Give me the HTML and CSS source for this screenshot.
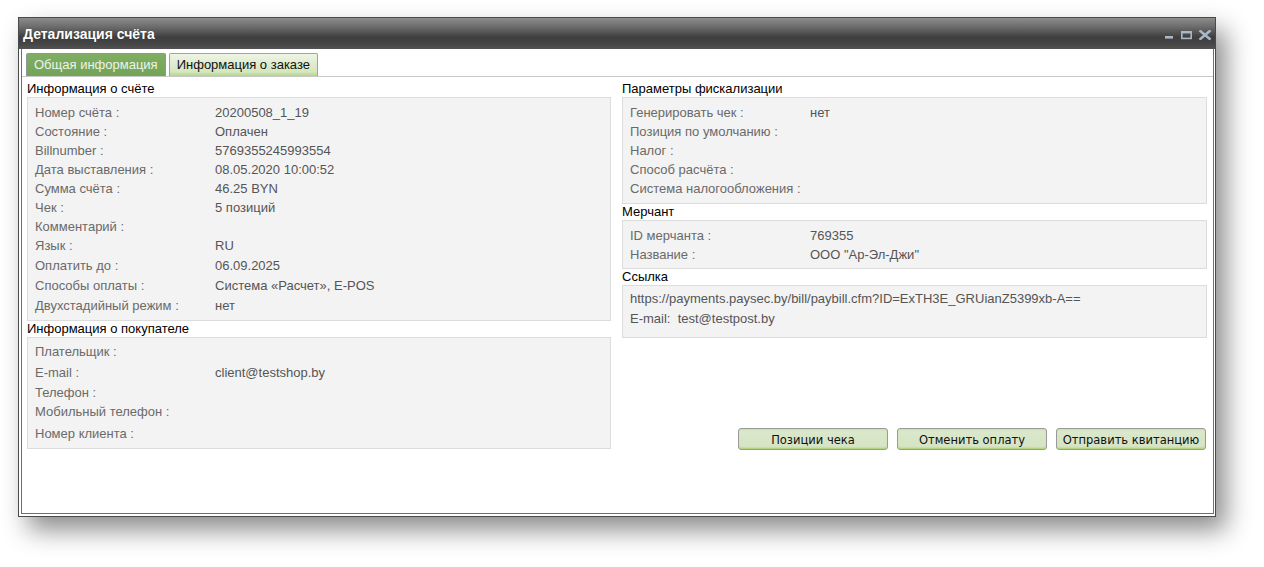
FILE: index.html
```html
<!DOCTYPE html>
<html lang="ru">
<head>
<meta charset="utf-8">
<title>Детализация счёта</title>
<link rel="stylesheet" href="styles.css">
</head>
<body>
<div class="desktop">
  <div class="window">
    <div class="titlebar">
      <span class="title">Детализация счёта</span>
      <svg class="controls" width="47" height="10" viewBox="0 0 47 10">
        <rect x="0" y="6" width="8" height="2.6" fill="#a9b7c6"/>
        <rect x="16.8" y="1.8" width="9.4" height="6.6" fill="none" stroke="#a9b7c6" stroke-width="1.6"/>
        <rect x="16" y="1" width="11" height="2.4" fill="#a9b7c6"/>
        <path d="M35.5 1.2 L44.5 8.8 M44.5 1.2 L35.5 8.8" stroke="#a9b7c6" stroke-width="2.6" stroke-linecap="square"/>
      </svg>
    </div>
    <div class="wbody">
      <div class="frame">
        <div class="tabs">
          <div class="tab active">Общая информация</div>
          <div class="tab">Информация о заказе</div>
        </div>
        <div class="panel">
          <div class="col">
            <div class="sec-title first">Информация о счёте</div>
            <div class="box box-bill">
              <div class="row"><span class="lbl">Номер счёта :</span><span class="val">20200508_1_19</span></div>
              <div class="row"><span class="lbl">Состояние :</span><span class="val">Оплачен</span></div>
              <div class="row"><span class="lbl">Billnumber :</span><span class="val">5769355245993554</span></div>
              <div class="row"><span class="lbl">Дата выставления :</span><span class="val">08.05.2020 10:00:52</span></div>
              <div class="row"><span class="lbl">Сумма счёта :</span><span class="val">46.25 BYN</span></div>
              <div class="row"><span class="lbl">Чек :</span><span class="val">5 позиций</span></div>
              <div class="row"><span class="lbl">Комментарий :</span><span class="val"></span></div>
              <div class="row"><span class="lbl">Язык :</span><span class="val">RU</span></div>
              <div class="row h21"><span class="lbl">Оплатить до :</span><span class="val">06.09.2025</span></div>
              <div class="row h20"><span class="lbl">Способы оплаты :</span><span class="val">Система «Расчет», E-POS</span></div>
              <div class="row h20"><span class="lbl">Двухстадийный режим :</span><span class="val">нет</span></div>
            </div>
            <div class="sec-title">Информация о покупателе</div>
            <div class="box box-buyer">
              <div class="row h20"><span class="lbl">Плательщик :</span><span class="val"></span></div>
              <div class="row h21"><span class="lbl">E-mail :</span><span class="val">client@testshop.by</span></div>
              <div class="row"><span class="lbl">Телефон :</span><span class="val"></span></div>
              <div class="row h20"><span class="lbl">Мобильный телефон :</span><span class="val"></span></div>
              <div class="row h22"><span class="lbl">Номер клиента :</span><span class="val"></span></div>
            </div>
          </div>
          <div class="col right">
            <div class="sec-title first">Параметры фискализации</div>
            <div class="box box-fisc">
              <div class="row"><span class="lbl">Генерировать чек :</span><span class="val">нет</span></div>
              <div class="row"><span class="lbl">Позиция по умолчанию :</span><span class="val"></span></div>
              <div class="row"><span class="lbl">Налог :</span><span class="val"></span></div>
              <div class="row"><span class="lbl">Способ расчёта :</span><span class="val"></span></div>
              <div class="row"><span class="lbl">Система налогообложения :</span><span class="val"></span></div>
            </div>
            <div class="sec-title">Мерчант</div>
            <div class="box box-merchant">
              <div class="row"><span class="lbl">ID мерчанта :</span><span class="val">769355</span></div>
              <div class="row"><span class="lbl">Название :</span><span class="val">ООО "Ар-Эл-Джи"</span></div>
            </div>
            <div class="sec-title">Ссылка</div>
            <div class="box box-link">
              <div class="line">https://payments.paysec.by/bill/paybill.cfm?ID=ExTH3E_GRUianZ5399xb-A==</div>
              <div class="line">E-mail:&nbsp; test@testpost.by</div>
            </div>
            <div class="buttons">
              <button class="btn" type="button">Позиции чека</button>
              <button class="btn" type="button">Отменить оплату</button>
              <button class="btn" type="button">Отправить квитанцию</button>
            </div>
          </div>
        </div>
      </div>
    </div>
  </div>
</div>
</body>
</html>
```

FILE: styles.css
```css
html, body {
  margin: 0;
  padding: 0;
  background: #ffffff;
}

.desktop {
  position: relative;
  width: 1264px;
  height: 567px;
  overflow: hidden;
  background: #ffffff;
  font-family: "Liberation Sans", Arial, sans-serif;
  font-size: 13px;
}

.window {
  position: absolute;
  left: 18px;
  top: 17px;
  width: 1198px;
  height: 500px;
  box-sizing: border-box;
  border: 1px solid #4a4a4a;
  background: #ffffff;
  display: flex;
  flex-direction: column;
  box-shadow: 10px 13px 24px rgba(0, 0, 0, 0.45);
}

.titlebar {
  height: 31px;
  flex: none;
  display: flex;
  align-items: center;
  padding: 0 3px 0 4px;
  background: linear-gradient(#8c8c8c 0%, #6a6a6a 30%, #3e3e3e 62%, #454545 82%, #535353 100%);
}

.title {
  color: #ffffff;
  font-weight: bold;
  font-size: 14px;
  line-height: 16px;
  padding-top: 1px;
  text-shadow: 0 0 1px rgba(0, 0, 0, 0.4);
}

.controls {
  margin-left: auto;
  margin-top: 2px;
  display: block;
}

.wbody {
  flex: 1;
  display: flex;
  padding: 0 1px 2px 2px;
  min-height: 0;
}

.frame {
  flex: 1;
  display: flex;
  flex-direction: column;
  border: 1px solid #6e6e6e;
  border-top: none;
  min-width: 0;
}

.tabs {
  display: flex;
  gap: 3px;
  padding: 4px 0 0 4px;
  height: 23px;
  flex: none;
}

.tab {
  box-sizing: border-box;
  height: 23px;
  padding: 0 7px;
  line-height: 21px;
  border: 1px solid #9aa3ad;
  border-bottom: none;
  border-radius: 2px 2px 0 0;
  color: #111111;
  background: linear-gradient(#eef5e4 0%, #dfebcf 45%, #d6e6c0 80%, #b4d585 100%);
}

.tab.active {
  color: #eef3ea;
  background: linear-gradient(#80af63 0%, #72a356 100%);
  border-color: #8e969e;
}

.panel {
  flex: 1;
  border-top: 1px solid #c8c8c8;
  padding: 0 5px;
  display: grid;
  grid-template-columns: 584px 585px;
  column-gap: 11px;
  align-items: start;
}

.col {
  display: flex;
  flex-direction: column;
}

.col.right {
  align-self: stretch;
  height: 373px;
}

.sec-title {
  color: #000000;
  line-height: 16px;
}

.sec-title.first {
  padding-top: 4px;
}

.box {
  background: #f3f3f3;
  border: 1px solid #dcdcdc;
  padding: 5px 7px 4px;
}

.box-buyer {
  padding-top: 4px;
  padding-bottom: 4px;
}

.box-fisc {
  padding-bottom: 5px;
}

.box-link {
  padding-top: 3px;
  padding-bottom: 8px;
}

.row {
  display: grid;
  grid-template-columns: 180px 1fr;
  height: 19px;
  line-height: 19px;
  white-space: nowrap;
}

.row.h20 {
  height: 20px;
  line-height: 20px;
}

.row.h21 {
  height: 21px;
  line-height: 22px;
}

.row.h22 {
  height: 22px;
  line-height: 23px;
}

.lbl {
  color: #6a6a6a;
}

.val {
  color: #555555;
}

.line {
  color: #555555;
  line-height: 20px;
  white-space: nowrap;
}

.buttons {
  margin-top: auto;
  display: flex;
  justify-content: flex-end;
  gap: 9px;
  padding-right: 1px;
}

.btn {
  width: 150px;
  height: 22px;
  box-sizing: border-box;
  padding: 0;
  border: 1px solid #9a9a9a;
  border-radius: 3px;
  font-family: "DejaVu Sans Condensed", "Liberation Sans", sans-serif;
  font-size: 12.8px;
  color: #111111;
  background: linear-gradient(#dbe8cc, #d5e4c3);
  box-shadow: inset 0 -2px 2px -1px #a8cf6a, inset 0 2px 2px -1px #c8e0a2;
}
```
